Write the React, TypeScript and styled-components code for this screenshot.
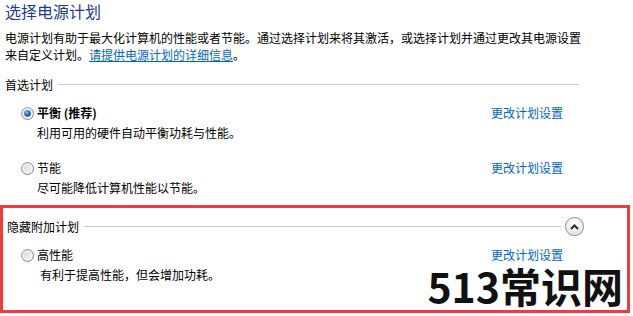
import React from "react";
import styled, { createGlobalStyle } from "styled-components";

const GlobalStyle = createGlobalStyle`
  body {
    margin: 0;
    background: #ffffff;
    font-family: "Noto Sans CJK SC", "Noto Sans", sans-serif;
    font-size: 12px;
    color: #000000;
  }
`;

const Page = styled.div`
  width: 633px;
  height: 316px;
  overflow: hidden;
  background: #ffffff;
`;

const Intro = styled.div`
  width: 578px;
  padding-left: 5px;
`;

const Title = styled.h1`
  margin: 0;
  font-size: 16px;
  line-height: 22px;
  font-weight: 400;
  color: #1e3a96;
`;

const Lead = styled.p`
  margin: 7px 0 0;
  line-height: 17px;
`;

const TextLink = styled.a`
  color: #0066cc;
  text-decoration: underline;
  cursor: pointer;
`;

const GroupHeader = styled.div<{ $top: number; $width: number }>`
  display: flex;
  align-items: center;
  gap: 5px;
  height: 17px;
  line-height: 17px;
  margin-top: ${(p) => p.$top}px;
  width: ${(p) => p.$width}px;
`;

const GroupLine = styled.div`
  flex: 1;
  height: 1px;
  background: #cccccc;
`;

const PlanList = styled.div<{ $indent: number }>`
  display: flex;
  flex-direction: column;
  gap: 17px;
  margin-top: 11px;
  padding-left: ${(p) => p.$indent}px;
`;

const Plan = styled.div`
  display: grid;
  grid-template-columns: 13px 1fr auto;
  grid-template-rows: 18px 18px;
  column-gap: 3px;
  row-gap: 2px;
  width: 542px;
  line-height: 18px;
`;

const RadioCell = styled.div`
  grid-row: 1;
  grid-column: 1;
  display: flex;
  align-items: center;
`;

const PlanName = styled.span<{ $bold?: boolean }>`
  grid-row: 1;
  grid-column: 2;
  font-weight: ${(p) => (p.$bold ? 700 : 400)};
`;

const PlanLink = styled.a`
  grid-row: 1;
  grid-column: 3;
  color: #0066cc;
  text-decoration: none;
  cursor: pointer;
`;

const PlanDesc = styled.span<{ $shift?: number }>`
  grid-row: 2;
  grid-column: 2 / 4;
  padding-left: ${(p) => p.$shift ?? 0}px;
`;

const HiddenBox = styled.div`
  position: relative;
  box-sizing: border-box;
  width: 630px;
  height: 108px;
  margin-top: 8px;
  padding: 10px 0 0 4px;
  border: 3px solid #ef3b3b;
`;

const ExpandButton = styled.button`
  box-sizing: border-box;
  width: 19px;
  height: 19px;
  padding: 0;
  margin-left: -1px;
  border-radius: 50%;
  border: 1px solid #8c8c8c;
  background: radial-gradient(circle at 50% 30%, #ffffff 0%, #ececec 55%, #cfcfcf 100%);
  display: flex;
  align-items: center;
  justify-content: center;
  box-shadow: inset 0 0 0 1px rgba(255, 255, 255, 0.7);
`;

const Watermark = styled.div`
  position: absolute;
  right: 4px;
  bottom: 5px;
  font-family: "Noto Sans CJK SC", sans-serif;
  font-size: 41px;
  font-weight: 700;
  line-height: 40px;
  color: #111111;
`;

function Radio({ checked }: { checked?: boolean }) {
  return (
    <svg width="13" height="13" viewBox="0 0 13 13">
      <defs>
        <linearGradient id="rOuter" x1="0" y1="0" x2="1" y2="1">
          <stop offset="0" stopColor="#a7a7a7" />
          <stop offset="1" stopColor="#7a7a7a" />
        </linearGradient>
        <linearGradient id="rFill" x1="0" y1="0" x2="1" y2="1">
          <stop offset="0" stopColor="#d4d4d4" />
          <stop offset="1" stopColor="#fafafa" />
        </linearGradient>
        <radialGradient id="rDot" cx="0.4" cy="0.35" r="0.7">
          <stop offset="0" stopColor="#8fd0ff" />
          <stop offset="0.45" stopColor="#2c7ad6" />
          <stop offset="1" stopColor="#0b3f8a" />
        </radialGradient>
      </defs>
      <circle cx="6.5" cy="6.5" r="6" fill="url(#rFill)" stroke="url(#rOuter)" strokeWidth="1" />
      <circle cx="6.5" cy="6.5" r="4.3" fill="none" stroke="#ffffff" strokeOpacity="0.6" strokeWidth="1" />
      {checked && <circle cx="6.5" cy="6.5" r="3.3" fill="url(#rDot)" />}
    </svg>
  );
}

type PlanData = {
  name: string;
  desc: string;
  checked?: boolean;
  bold?: boolean;
  shift?: number;
};

const preferred: PlanData[] = [
  { name: "平衡 (推荐)", desc: "利用可用的硬件自动平衡功耗与性能。", checked: true, bold: true },
  { name: "节能", desc: "尽可能降低计算机性能以节能。" },
];

const extra: PlanData[] = [
  { name: "高性能", desc: "有利于提高性能，但会增加功耗。", shift: 3 },
];

function PlanItem({ plan }: { plan: PlanData }) {
  return (
    <Plan>
      <RadioCell>
        <Radio checked={plan.checked} />
      </RadioCell>
      <PlanName $bold={plan.bold}>{plan.name}</PlanName>
      <PlanLink>更改计划设置</PlanLink>
      <PlanDesc $shift={plan.shift}>{plan.desc}</PlanDesc>
    </Plan>
  );
}

export default function App() {
  return (
    <Page>
      <GlobalStyle />
      <Intro>
        <Title>选择电源计划</Title>
        <Lead>
          电源计划有助于最大化计算机的性能或者节能。通过选择计划来将其激活，或选择计划并通过更改其电源设置来自定义计划。
          <TextLink>请提供电源计划的详细信息</TextLink>。
        </Lead>
        <GroupHeader $top={13} $width={574}>
          <span>首选计划</span>
          <GroupLine />
        </GroupHeader>
        <PlanList $indent={16}>
          {preferred.map((p) => (
            <PlanItem key={p.name} plan={p} />
          ))}
        </PlanList>
      </Intro>
      <HiddenBox>
        <GroupHeader $top={0} $width={577}>
          <span>隐藏附加计划</span>
          <GroupLine />
          <ExpandButton>
            <svg width="9" height="6" viewBox="0 0 9 6">
              <path d="M1 5 L4.5 1.5 L8 5" fill="none" stroke="#2a2a2a" strokeWidth="2" />
            </svg>
          </ExpandButton>
        </GroupHeader>
        <PlanList $indent={14}>
          {extra.map((p) => (
            <PlanItem key={p.name} plan={p} />
          ))}
        </PlanList>
        <Watermark>513常识网</Watermark>
      </HiddenBox>
    </Page>
  );
}
